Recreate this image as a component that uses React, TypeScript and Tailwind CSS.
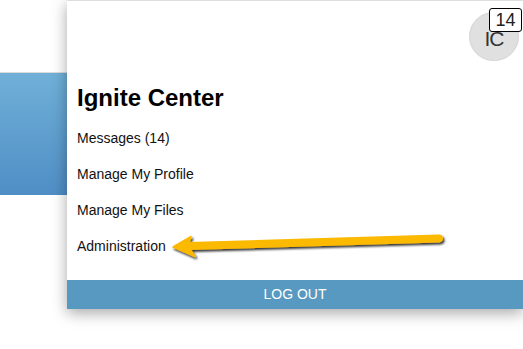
import React from "react";

export default function App() {
  const menu = ["Messages (14)", "Manage My Profile", "Manage My Files", "Administration"];
  return (
    <div
      className="relative w-[523px] h-[349px] overflow-hidden bg-white"
      style={{ fontFamily: '"Liberation Sans", Arial, sans-serif' }}
    >
      {/* page behind */}
      <div className="h-[73px] border-b border-[#dcdcdc] bg-white" />
      <div className="h-[122px] bg-gradient-to-b from-[#70b0d8] to-[#4f8ec5]" />

      {/* dropdown panel */}
      <div className="absolute left-[67px] top-0 right-0 h-[309px] bg-white border-t border-[#dedede] shadow-[0_4px_14px_rgba(0,0,0,0.35)] flex flex-col">
        <div className="flex justify-end pr-[4px] pt-[11px]">
          <div className="relative w-[50px] h-[49px] rounded-full bg-[#e0e0e0] border border-[#d4d4d4] flex items-center justify-center text-[21px] text-[#333] leading-none">
            <span className="mt-[3px] tracking-[-1px]">IC</span>
            <div className="absolute left-[19px] top-[-5px] w-[33px] h-[24px] bg-white border border-black rounded-[3px] flex items-center justify-center text-[18px] text-[#222] leading-none">
              14
            </div>
          </div>
        </div>
        <h1 className="mt-[23px] pl-[10px] text-[24px] leading-[28px] font-bold text-black">Ignite Center</h1>
        <ul className="mt-[8px] pl-[10px]">
          {menu.map((m) => (
            <li key={m} className="text-[14px] leading-[36px] text-[#111]">
              {m}
            </li>
          ))}
        </ul>
        <div className="mt-auto h-[29px] bg-[#5899c1] text-white text-[14px] leading-[29px] text-center">LOG OUT</div>
      </div>

      {/* annotation arrow */}
      <svg
        className="absolute left-0 top-0 pointer-events-none"
        width="523"
        height="349"
        viewBox="0 0 523 349"
      >
        <defs>
          <filter id="sh" x="-10%" y="-50%" width="120%" height="200%">
            <feDropShadow dx="1.5" dy="2" stdDeviation="1" floodColor="#000" floodOpacity="0.8" />
          </filter>
        </defs>
        <g filter="url(#sh)">
          <line x1="189" y1="246" x2="439" y2="238.5" stroke="#fbb900" strokeWidth="8" strokeLinecap="round" />
          <path d="M173 247 L191 236.5 L188 246 L195 256.5 Z" fill="#fbb900" stroke="#fbb900" strokeWidth="1.5" strokeLinejoin="round" />
        </g>
      </svg>
    </div>
  );
}
